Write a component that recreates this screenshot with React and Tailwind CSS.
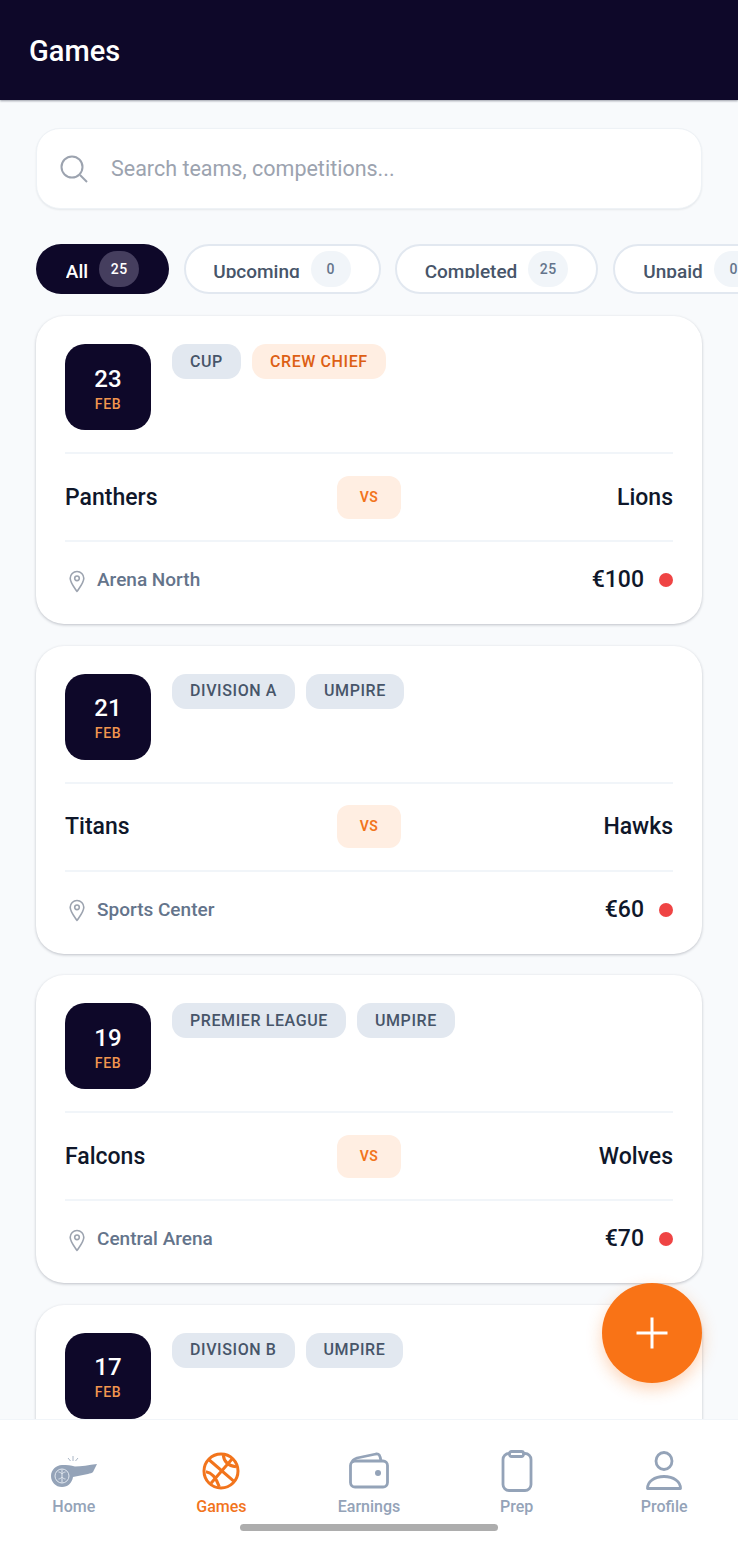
import React from 'react';

const GAMES = [
  { day: 23, tags: [['CUP'], ['CREW CHIEF', true]], home: 'Panthers', away: 'Lions', venue: 'Arena North', fee: '€100' },
  { day: 21, tags: [['DIVISION A'], ['UMPIRE']], home: 'Titans', away: 'Hawks', venue: 'Sports Center', fee: '€60' },
  { day: 19, tags: [['PREMIER LEAGUE'], ['UMPIRE']], home: 'Falcons', away: 'Wolves', venue: 'Central Arena', fee: '€70' },
  // last card runs under the tab bar, only its top row shows
  { day: 17, tags: [['DIVISION B'], ['UMPIRE']] },
];

const FILTERS = [
  { label: 'All', count: 25, active: true, w: 'w-[133px]' },
  { label: 'Upcoming', count: 0, w: 'w-[197px]' },
  { label: 'Completed', count: 25, w: 'w-[203px]' },
  { label: 'Unpaid', count: 0, w: 'w-[172px]' },
];

const PinIcon = () => (
  <svg width="24" height="24" viewBox="0 0 24 24" fill="none" stroke="#9ca3af" strokeWidth="1.6" className="shrink-0">
    <path d="M12 22.5c-1-2-6.8-8.2-6.8-13.2a6.8 6.8 0 0 1 13.6 0c0 5-5.800 11.200-6.800 13.200z" strokeLinejoin="round" />
    <circle cx="12" cy="9.300" r="2.300" />
  </svg>
);

const GameCard = ({ game }) => (
  <div className="bg-white rounded-[28px] shadow-[0_1px_3px_rgba(15,23,42,0.25)] px-[29px] pt-[28px] h-[308px] shrink-0">
    <div className="flex gap-[21px] pb-[22px] border-b-2 border-[#f1f5f9]">
      <div className="w-[86px] h-[86px] rounded-[20px] bg-[#0e0829] flex flex-col items-center justify-center pt-[2px]">
        <span className="text-white text-[24px] leading-[30px] font-medium">{game.day}</span>
        <span className="text-[#f2964f] text-[14px] leading-[18px] mt-[1px] font-medium tracking-[0.6px]">FEB</span>
      </div>
      <div className="flex gap-[11px] items-start">
        {game.tags.map(([text, hot]) => (
          <span
            key={text}
            className={`h-[35px] rounded-[14px] px-[18px] flex items-center text-[16px] font-medium tracking-[0.6px] ${hot ? 'bg-[#ffeee2] text-[#dd5f14]' : 'bg-[#e2e8f0] text-[#475569]'}`}
          >
            {text}
          </span>
        ))}
      </div>
    </div>
    {game.home && (
      <>
        <div className="h-[88px] grid grid-cols-[1fr_64px_1fr] items-center border-b-2 border-[#f1f5f9] text-[#0f172a] text-[23px] font-medium">
          <span className="mt-[2px]">{game.home}</span>
          <span className="h-[43px] rounded-[12px] bg-[#ffeee2] text-[#f2741c] text-[14px] font-semibold tracking-[0.5px] flex items-center justify-center">VS</span>
          <span className="mt-[2px] text-right">{game.away}</span>
        </div>
        <div className="h-[77px] flex items-center">
          <PinIcon />
          <span className="ml-[8px] text-[#64748b] text-[19px] font-medium">{game.venue}</span>
          <span className="ml-auto text-[#0f172a] text-[23px] font-medium">{game.fee}</span>
          <span className="ml-[15px] mb-[1px] w-[14px] h-[14px] rounded-full bg-[#ef4444]" />
        </div>
      </>
    )}
  </div>
);

const WhistleIcon = () => (
  <svg width="48" height="36" viewBox="0 0 48 36" fill="none">
    <path d="M12 12c5 0 9 0 13 1.500 6 0 14-1.500 22-2.500l-4 8c-1 1-3 1.500-5 2l-15 3c-1 6-5 10-11 10C5.500 34 1 29 1 23s5-11 11-11z" fill="#94a3b8" />
    <circle cx="12" cy="23" r="7" stroke="#e2e8f0" strokeWidth="1" />
    <path d="M12 16.500v13M8.500 19c1.500 0 2.500 1 3.500 2M15.500 19c-1.500 0-2.500 1-3.500 2M8.500 26c1.500 0 2.500-1 3.500-2M15.500 26c-1.500 0-2.500-1-3.500-2" stroke="#e2e8f0" strokeWidth="1" />
    <path d="M18 5l2.500 3M23 3v5M28 5l-2.500 3" stroke="#94a3b8" strokeWidth="0.8" />
  </svg>
);

const BallIcon = () => (
  <svg width="38" height="38" viewBox="0 0 38 38" fill="none" stroke="#f2741c" strokeWidth="3">
    <circle cx="19" cy="19" r="17" />
    <path d="M7.300 8L32.300 29.700M30.700 6.300L9 31.300M21.300 3Q22.300 13.300 34 14.700M4 19.700Q12.300 20.700 17.300 34.700" />
  </svg>
);

const WalletIcon = () => (
  <svg width="40" height="38" viewBox="0 0 40 38" fill="none" stroke="#94a3b8" strokeWidth="2.800" strokeLinejoin="round">
    <path d="M3 11C3 8 5 7 8 6L27 2C30 1.500 31 3 32 9" />
    <rect x="1.500" y="9" width="37" height="26" rx="4.500" />
    <circle cx="29" cy="21" r="3" fill="#94a3b8" stroke="none" />
  </svg>
);

const ClipboardIcon = () => (
  <svg width="32" height="42" viewBox="0 0 32 42" fill="none" stroke="#94a3b8" strokeWidth="2.800">
    <rect x="2" y="3.500" width="28" height="37" rx="6" />
    <rect x="8.500" y="1.500" width="14" height="5" rx="2" fill="#fff" />
  </svg>
);

const PersonIcon = () => (
  <svg width="38" height="40" viewBox="0 0 38 40" fill="none" stroke="#94a3b8" strokeWidth="2.800" strokeLinejoin="round">
    <ellipse cx="19" cy="10" rx="8" ry="8.500" />
    <path d="M2.500 37.500c0-7 7-12 16.500-12s16.500 5 16.500 12z" />
  </svg>
);

const NAV = [
  { label: 'Home', icon: <WhistleIcon /> },
  { label: 'Games', icon: <BallIcon />, active: true },
  { label: 'Earnings', icon: <WalletIcon /> },
  { label: 'Prep', icon: <ClipboardIcon /> },
  { label: 'Profile', icon: <PersonIcon /> },
];

export default function App() {
  return (
    <div className="relative w-[738px] h-[1541px] overflow-hidden flex flex-col bg-[#f8fafc] font-['Roboto',sans-serif]">
      <header className="h-[100px] shrink-0 bg-[#0e0829] flex items-center px-[29px] pt-[4px] shadow-[0_1px_2px_rgba(15,23,42,0.4)]">
        <h1 className="text-white text-[29px] font-medium">Games</h1>
      </header>

      <main className="flex-1 overflow-hidden px-[36px] pt-[28px]">
        <div className="h-[81px] bg-white rounded-[24px] border border-[#eef2f6] shadow-[0_1px_2px_rgba(15,23,42,0.08)] flex items-center pl-[22px]">
          <svg width="30" height="30" viewBox="0 0 30 30" fill="none" stroke="#9ca3af" strokeWidth="2">
            <circle cx="13" cy="13" r="10.500" />
            <path d="M21 21l7 7" />
          </svg>
          <span className="ml-[22px] mt-[2px] text-[21.5px] text-[#9ca3af]">Search teams, competitions...</span>
        </div>

        <div className="flex gap-[14.500px] mt-[35px] w-[760px]">
          {FILTERS.map((f) => (
            <div
              key={f.label}
              className={`${f.w} h-[50px] shrink-0 rounded-full flex items-center justify-center gap-[11px] ${f.active ? 'bg-[#0e0829]' : 'bg-white border-2 border-[#e2e8f0]'}`}
            >
              {/* labels are cut at the baseline in the app */}
              <span className={`h-[18px] overflow-hidden text-[19px] leading-[24px] font-medium ${f.active ? 'text-white' : 'text-[#475569]'}`}>{f.label}</span>
              <span className={`w-[40px] h-[36px] rounded-full flex items-center justify-center text-[14px] font-medium tracking-[0.5px] ${f.active ? 'bg-[#453e5e] text-white' : 'bg-[#f1f5f9] text-[#64748b]'}`}>{f.count}</span>
            </div>
          ))}
        </div>

        <div className="flex flex-col gap-[21.500px] mt-[22px]">
          {GAMES.map((g) => (
            <GameCard key={g.day} game={g} />
          ))}
        </div>
      </main>

      <nav className="h-[122px] shrink-0 bg-white border-t border-[#f1f5f9] grid grid-cols-5 pt-[28px] z-10">
        {NAV.map((item) => (
          <div key={item.label} className="flex flex-col items-center">
            <div className="h-[46px] flex items-center justify-center">{item.icon}</div>
            <span className={`text-[16px] leading-[22px] mt-[2px] font-medium ${item.active ? 'text-[#f2741c]' : 'text-[#94a3b8]'}`}>{item.label}</span>
          </div>
        ))}
      </nav>

      <button className="absolute left-[602px] top-[1283px] w-[100px] h-[100px] rounded-full bg-[#f97316] shadow-[0_6px_16px_rgba(249,115,22,0.3)] flex items-center justify-center z-20">
        <svg width="32" height="32" viewBox="0 0 32 32" stroke="#fff" strokeWidth="3">
          <path d="M16 0.500v31M0.500 16h31" />
        </svg>
      </button>

      <div className="absolute left-[240px] top-[1524px] w-[258px] h-[7px] rounded-full bg-[#adadad] z-20" />
    </div>
  );
}
